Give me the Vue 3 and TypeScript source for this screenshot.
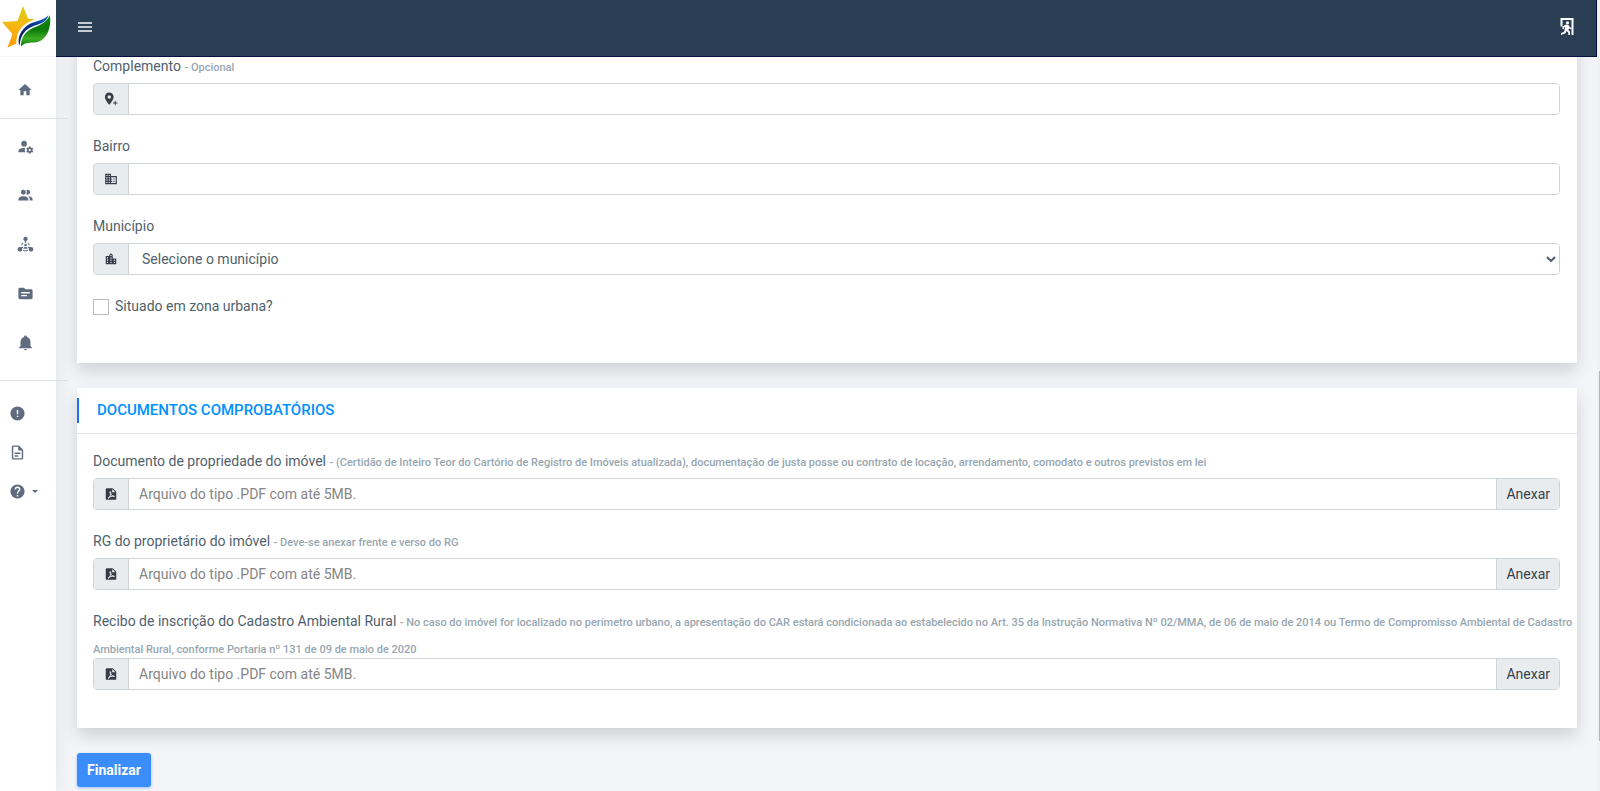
<script setup lang="ts">
import { ref } from 'vue'

interface NavItem { label: string; path: string }
interface DocField { id: string; label: string; hint: string; long?: boolean }

const mainNav: NavItem[] = [
  { label: 'Usuários', path: 'M10 4A4 4 0 0 0 6 8A4 4 0 0 0 10 12A4 4 0 0 0 14 8A4 4 0 0 0 10 4M17 12C16.84 12 16.76 12.08 16.76 12.24L16.5 13.5C16.28 13.68 15.96 13.84 15.72 14L14.44 13.5C14.36 13.5 14.2 13.5 14.12 13.6L13.16 15.36C13.08 15.44 13.08 15.6 13.24 15.68L14.28 16.5V17.5L13.24 18.32C13.16 18.4 13.08 18.56 13.16 18.64L14.12 20.4C14.2 20.5 14.36 20.5 14.44 20.5L15.72 20C15.96 20.16 16.28 20.32 16.5 20.5L16.76 21.76C16.76 21.92 16.84 22 17 22H19C19.08 22 19.24 21.92 19.24 21.76L19.4 20.5C19.72 20.32 20.04 20.16 20.28 20L21.5 20.5C21.64 20.5 21.8 20.5 21.8 20.4L22.84 18.64C22.92 18.56 22.84 18.4 22.76 18.32L21.72 17.5V16.5L22.76 15.68C22.84 15.6 22.92 15.44 22.84 15.36L21.8 13.6C21.8 13.5 21.64 13.5 21.5 13.5L20.28 14C20.04 13.84 19.72 13.68 19.4 13.5L19.24 12.24C19.24 12.08 19.08 12 19 12H17M10 14C5.58 14 2 15.79 2 18V20H11.68A7 7 0 0 1 11 17A7 7 0 0 1 11.64 14.09C11.11 14.03 10.56 14 10 14M18 15.5C18.84 15.5 19.5 16.16 19.5 17C19.5 17.84 18.84 18.5 18 18.5C17.16 18.5 16.5 17.84 16.5 17C16.5 16.16 17.16 15.5 18 15.5Z' },
  { label: 'Pessoas', path: 'M16 17V19H2V17S2 13 9 13 16 17 16 17M12.5 7.5A3.5 3.5 0 1 0 9 11A3.5 3.5 0 0 0 12.5 7.5M15.94 13A5.32 5.32 0 0 1 18 17V19H22V17S22 13.37 15.94 13M15 4A3.39 3.39 0 0 0 13.07 4.59A5 5 0 0 1 13.07 10.41A3.39 3.39 0 0 0 15 11A3.5 3.5 0 0 0 15 4Z' },
  { label: 'Rede', path: 'M12 1a3.200 3.200 0 0 1 1 6.200V9.500h-2V7.200A3.200 3.200 0 0 1 12 1M12 11a1.800 1.800 0 1 1 0 3.600 1.800 1.800 0 0 1 0-3.600M9 18c0-1.700 1.200-2.500 3-2.500s3 .8 3 2.500ZM4.200 15.500c.7 0 1.300.2 1.800.5l2-1.300.9 1.500-1.800 1.200A3.200 3.200 0 1 1 4.200 15.500M19.800 15.500a3.200 3.200 0 1 1-2.900 1.900L15.100 16.200l.9-1.500 2 1.300c.5-.3 1.100-.5 1.800-.5M8.500 9l.8 1.200A4.500 4.500 0 0 0 7.500 13H6a6 6 0 0 1 2.500-4M15.500 9A6 6 0 0 1 18 13h-1.500a4.500 4.500 0 0 0-1.800-2.800ZM9 19.500a7 7 0 0 0 6 0l.5 1.200a8 8 0 0 1-7 0Z' },
  { label: 'Processos', path: 'M20 6h-8l-2-2H4c-1.100 0-1.990.9-1.990 2L2 18c0 1.100.9 2 2 2h16c1.100 0 2-.9 2-2V8c0-1.100-.9-2-2-2zm-6 10H6v-2h8v2zm4-4H6v-2h12v2z' },
  { label: 'Notificações', path: 'M21,19V20H3V19L5,17V11C5,7.900 7.030,5.170 10,4.290C10,4.190 10,4.100 10,4A2,2 0 0,1 12,2A2,2 0 0,1 14,4C14,4.100 14,4.190 14,4.290C16.970,5.170 19,7.900 19,11V17L21,19M14,21A2,2 0 0,1 12,23A2,2 0 0,1 10,21' },
]

const helpNav: NavItem[] = [
  { label: 'Avisos', path: 'M13,13H11V7H13M13,17H11V15H13M12,2A10,10 0 0,0 2,12A10,10 0 0,0 12,22A10,10 0 0,0 22,12A10,10 0 0,0 12,2Z' },
  { label: 'Documentos', path: 'M6,2A2,2 0 0,0 4,4V20A2,2 0 0,0 6,22H18A2,2 0 0,0 20,20V8L14,2H6M6,4H13V9H18V20H6V4M8,12V14H16V12H8M8,16V18H13V16H8Z' },
  { label: 'Ajuda', path: 'M15.070,11.250L14.170,12.170C13.450,12.890 13,13.500 13,15H11V14.500C11,13.390 11.450,12.390 12.170,11.670L13.410,10.410C13.780,10.050 14,9.550 14,9C14,7.890 13.100,7 12,7A2,2 0 0,0 10,9H8A4,4 0 0,1 12,5A4,4 0 0,1 16,9C16,9.880 15.640,10.670 15.070,11.250M13,19H11V17H13M12,2A10,10 0 0,0 2,12A10,10 0 0,0 12,22A10,10 0 0,0 22,12C22,6.470 17.500,2 12,2Z' },
]

const documents: DocField[] = [
  { id: 'propriedade', label: 'Documento de propriedade do imóvel', hint: '(Certidão de Inteiro Teor do Cartório de Registro de Imóveis atualizada), documentação de justa posse ou contrato de locação, arrendamento, comodato e outros previstos em lei' },
  { id: 'rg', label: 'RG do proprietário do imóvel', hint: 'Deve-se anexar frente e verso do RG' },
  { id: 'car', label: 'Recibo de inscrição do Cadastro Ambiental Rural', hint: 'No caso do imóvel for localizado no perímetro urbano, a apresentação do CAR estará condicionada ao estabelecido no Art. 35 da Instrução Normativa Nº 02/MMA, de 06 de maio de 2014 ou Termo de Compromisso Ambiental de Cadastro Ambiental Rural, conforme Portaria nº 131 de 09 de maio de 2020', long: true },
]

const complemento = ref('')
const bairro = ref('')
const municipio = ref('')
const zonaUrbana = ref(false)
</script>

<template>
  <div class="app">
    <aside class="sidebar">
      <a class="logo" href="#" aria-label="Início">
        <svg viewBox="0 0 52 48" width="52" height="48">
          <defs>
            <linearGradient id="star" x1="0" y1="0" x2="0" y2="1">
              <stop offset="0" stop-color="#d9cf10" />
              <stop offset=".5" stop-color="#f6b614" />
              <stop offset="1" stop-color="#fb9a08" />
            </linearGradient>
            <linearGradient id="leaf" x1="0" y1="0" x2="0" y2="1">
              <stop offset="0" stop-color="#0a8a10" />
              <stop offset=".45" stop-color="#0c7a0c" />
              <stop offset=".75" stop-color="#3fae22" />
              <stop offset="1" stop-color="#087008" />
            </linearGradient>
            <linearGradient id="wave" x1="0" y1="1" x2="1" y2="0">
              <stop offset="0" stop-color="#0b1c50" />
              <stop offset=".5" stop-color="#0a2f80" />
              <stop offset="1" stop-color="#1560d0" />
            </linearGradient>
          </defs>
          <path fill="url(#star)" d="M23 2 28 14.500 38 16 27 29 20 38 7.500 43.500 12.500 30 2 18 17.500 17Z" />
          <path fill="#fff" d="M16.500 41C15.500 26 24 20 32 16.500 40 14 45 13 50 8L52 18 40 40 20 46Z" />
          <path fill="url(#wave)" d="M19.500 42C16.500 34 21 25 29.500 20 37 16.500 44 16.500 48.500 11 47 17 42 19.500 35 21.500 24.500 25.500 20.500 31 19.500 42Z" />
          <path fill="url(#leaf)" d="M21 42.500C20.500 33.500 25.500 27 34 23.500 41 21 46 18 50 11.500 51.500 24 47 34 39 37.500 32 40 26.500 36.500 21 42.500Z" />
        </svg>
      </a>
      <nav class="nav">
        <a class="nav-item nav-home" href="#" aria-label="Página inicial">
          <svg viewBox="0 0 24 24" width="16" height="16"><path d="M10,20V14H14V20H19V12H22L12,3L2,12H5V20H10Z" /></svg>
        </a>
        <hr class="divider">
        <div class="nav-group">
          <a v-for="item in mainNav" :key="item.label" class="nav-item" href="#" :aria-label="item.label">
            <svg viewBox="0 0 24 24" width="17" height="17"><path fill-rule="evenodd" :d="item.path" /></svg>
          </a>
        </div>
        <hr class="divider">
        <div class="help-group">
          <a v-for="item in helpNav" :key="item.label" class="help-item" href="#" :aria-label="item.label">
            <svg viewBox="0 0 24 24" width="17" height="17"><path fill-rule="evenodd" :d="item.path" /></svg>
            <span v-if="item.label === 'Ajuda'" class="caret" />
          </a>
        </div>
      </nav>
    </aside>

    <div class="page">
      <header class="topbar">
        <button class="icon-button" type="button" aria-label="Menu">
          <svg viewBox="0 0 14 10" width="14" height="10"><path fill="#c6cbd1" d="M0 0h14v2H0zM0 4h14v2H0zM0 8h14v2H0z" /></svg>
        </button>
        <button class="icon-button" type="button" aria-label="Sair">
          <svg viewBox="0 0 14 18" width="14" height="18">
            <path fill="#fff" d="M.500 0h13v17h-2V2h-9v6.500H.500z" />
            <circle cx="7.500" cy="4.800" r="1.600" fill="#fff" />
            <path fill="#fff" d="M6 6.500 8.500 7l1.300 2.200 1.700.5v1.500l-2.600-.6-.5 1.400 1.600 1.700V17H8.300v-2.600L6.500 13l-1 2.200L1 17v-1.900l3-1.100 1.300-5-1.300.6V11H2.500V8.500Z" />
          </svg>
        </button>
      </header>

      <main class="content">
        <section class="card card-address">
          <div class="field">
            <label class="label" for="complemento">Complemento <small>- Opcional</small></label>
            <div class="group">
              <span class="addon">
                <svg viewBox="0 0 24 24" width="14" height="14"><path fill-rule="evenodd" d="M9 1a7.500 7.500 0 0 1 7.500 7.500C16.500 13.500 9 22 9 22S1.500 13.500 1.500 8.500A7.500 7.500 0 0 1 9 1m0 4.500a3 3 0 1 0 0 6 3 3 0 0 0 0-6M18.500 15h1.500V18H23v1.500h-3v3h-1.500v-3h-3V18h3Z" /></svg>
              </span>
              <input id="complemento" v-model="complemento" class="control" type="text">
            </div>
          </div>
          <div class="field">
            <label class="label" for="bairro">Bairro</label>
            <div class="group">
              <span class="addon">
                <svg viewBox="0 0 24 24" width="14" height="14"><path d="M18,15H16V17H18M18,11H16V13H18M20,19H12V17H14V15H12V13H14V11H12V9H20M10,7H8V5H10M10,11H8V9H10M10,15H8V13H10M10,19H8V17H10M6,7H4V5H6M6,11H4V9H6M6,15H4V13H6M6,19H4V17H6M12,7V3H2V21H22V7H12Z" /></svg>
              </span>
              <input id="bairro" v-model="bairro" class="control" type="text">
            </div>
          </div>
          <div class="field">
            <label class="label" for="municipio">Município</label>
            <div class="group">
              <span class="addon">
                <svg viewBox="0 0 24 24" width="14" height="14"><path d="M19,15H17V13H19M19,19H17V17H19M13,7H11V5H13M13,11H11V9H13M13,15H11V13H13M13,19H11V17H13M7,11H5V9H7M7,15H5V13H7M7,19H5V17H7M15,11V5L12,2L9,5V7H3V21H21V11H15Z" /></svg>
              </span>
              <select id="municipio" v-model="municipio" class="control select">
                <option value="">Selecione o município</option>
              </select>
            </div>
          </div>
          <div class="check">
            <input id="zona" v-model="zonaUrbana" type="checkbox">
            <label for="zona">Situado em zona urbana?</label>
          </div>
        </section>

        <section class="card">
          <header class="card-header">
            <h2>DOCUMENTOS COMPROBATÓRIOS</h2>
          </header>
          <div class="card-body">
            <div v-for="doc in documents" :key="doc.id" class="field" :class="{ long: doc.long }">
              <label class="label" :for="doc.id">{{ doc.label }} <small>- {{ doc.hint }}</small></label>
              <div class="group">
                <span class="addon">
                  <svg viewBox="0 0 24 24" width="14" height="14">
                    <path d="M5 2h10l6 6v12a2 2 0 0 1-2 2H5a2 2 0 0 1-2-2V4a2 2 0 0 1 2-2Z" />
                    <path fill="#e9ecef" d="M14 3.500V9h5.500Z" />
                    <path fill="none" stroke="#e9ecef" stroke-width="1.700" d="M10.500 7.500c-1 3 2 8 7.500 8.500-4-1-9 .5-11 3.500 3-1 5.500-7 4.500-11.500" />
                  </svg>
                </span>
                <input :id="doc.id" class="control" type="text" readonly placeholder="Arquivo do tipo .PDF com até 5MB.">
                <button class="attach" type="button">Anexar</button>
              </div>
            </div>
          </div>
        </section>

        <button class="submit" type="submit">Finalizar</button>
      </main>
    </div>
    <div class="scroll-track"><div class="scroll-thumb" /></div>
  </div>
</template>

<style>
body {
  margin: 0;
  background: #f3f5f9;
}
</style>

<style scoped>
.app,
.app * {
  box-sizing: border-box;
}

.app {
  display: flex;
  height: 100vh;
  overflow: hidden;
  font: 400 14px/27px Roboto, sans-serif;
  color: #4f5f6d;
  background: #f3f5f9;
}

button,
input,
select {
  font: inherit;
  color: inherit;
}

.sidebar {
  position: relative;
  z-index: 2;
  flex: none;
  width: 56px;
  background: #fff;
  box-shadow: 0 0 20px rgba(40, 40, 60, .09);
}

.logo {
  display: flex;
  align-items: center;
  height: 57px;
  background: #fff;
  border-bottom: 1px solid #f5f5f6;
}

.nav svg {
  display: block;
  fill: #5f6b7e;
}

.nav-item {
  display: flex;
  align-items: center;
  height: 49px;
  padding-left: 17px;
}

.nav-home {
  height: 61px;
  padding: 5px 0 0 17px;
}

.divider {
  width: 68px;
  height: 1px;
  margin: 0;
  border: 0;
  background: #dfe0e4;
}

.nav-group {
  padding: 3px 0 13px;
}

.help-group {
  padding-top: 13px;
}

.help-item {
  display: flex;
  align-items: center;
  height: 39px;
  padding-left: 9px;
}

.caret {
  margin-left: 6px;
  border: 3px solid transparent;
  border-top-color: #5f6b7e;
  border-bottom: 0;
}

.page {
  display: flex;
  flex: 1;
  flex-direction: column;
  min-width: 0;
}

.topbar {
  position: relative;
  z-index: 3;
  display: flex;
  flex: none;
  align-items: center;
  justify-content: space-between;
  height: 57px;
  padding: 0 22px 2px;
  background: #2a3f54;
  border-right: 1px solid #08103f;
  border-bottom: 1px solid #08103f;
}

.icon-button {
  display: flex;
  padding: 0;
  border: 0;
  background: none;
}

.content {
  flex: 1;
  padding: 0 20px 0 21px;
  overflow: hidden;
}

.card {
  margin-bottom: 25px;
  background: #fff;
  box-shadow: 0 8px 16px rgba(0, 0, 0, .15);
}

.card-address {
  margin-top: -20px;
  padding: 16px 17px 43px 16px;
}

.card-header {
  padding: 10px 0;
  border-bottom: 1px solid #e4e6e9;
}

.card-header h2 {
  margin: 0;
  padding-left: 18px;
  border-left: 2px solid #1a73e8;
  font-size: 15px;
  font-weight: 500;
  line-height: 25px;
  color: #0091ff;
}

.card-body {
  padding: 14px 17px 20px 16px;
}

.field {
  margin-bottom: 18px;
}

.label {
  display: block;
  margin-bottom: 3px;
}

.long .label {
  margin-right: -16px;
  margin-bottom: -4px;
}

.label small {
  font-size: 11px;
  font-weight: 500;
  line-height: 16px;
  color: #98a6b0;
}

.group {
  position: relative;
  display: flex;
  height: 32px;
  border: 1px solid #ced4da;
  border-radius: 4px;
  background: #fff;
  overflow: hidden;
}

.addon {
  display: flex;
  flex: none;
  align-items: center;
  justify-content: center;
  width: 35px;
  background: #e9ecef;
  border-right: 1px solid #ced4da;
}

.addon svg {
  fill: #343d48;
}

.control {
  flex: 1;
  min-width: 0;
  padding: 0 10px;
  border: 0;
  outline: 0;
  background: #fff;
}

.control::placeholder {
  color: #858585;
  opacity: 1;
}

.select {
  padding: 0 0 0 9px;
}

.attach {
  flex: none;
  padding: 0 9px;
  border: 0;
  border-left: 1px solid #ced4da;
  background: #e9ecef;
  color: #36404a;
  line-height: 28px;
}

.check {
  display: flex;
  align-items: center;
  gap: 6px;
}

.check input {
  appearance: none;
  width: 16px;
  height: 16px;
  margin: 0;
  border: 1px solid #b9bdc1;
  background: #fff;
}

.check input:checked {
  background: #3a8dfb;
}

.submit {
  display: block;
  height: 34px;
  padding: 0 10px;
  border: 0;
  border-radius: 3px;
  background: #3a8dfb;
  box-shadow: 0 1px 3px rgba(58, 141, 251, .5);
  color: #fff;
  font-weight: 700;
}

.scroll-track {
  display: flex;
  flex: none;
  flex-direction: column;
  justify-content: flex-end;
  align-items: flex-end;
  width: 3px;
  padding-bottom: 50px;
  background: #f1f1f2;
}

.scroll-thumb {
  width: 1px;
  height: 50%;
  background: #b4b4b4;
}
</style>
